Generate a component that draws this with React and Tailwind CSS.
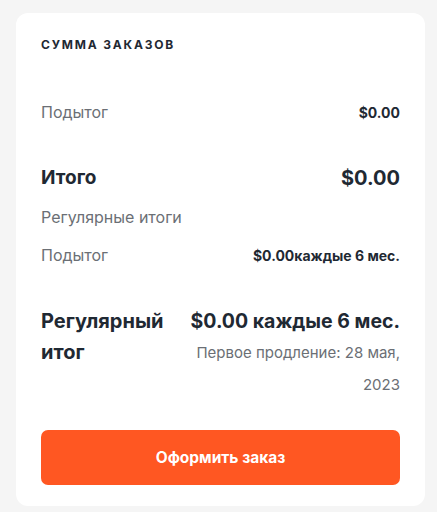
export default function App() {
  return (
    <div className="min-h-[512px] w-[437px] bg-[#f5f5f5] pt-[13px] pl-[16px] pr-[12px] pb-[7px]" style={{ fontFamily: "Inter, 'Noto Sans', sans-serif" }}>
      <div className="rounded-[12px] bg-white px-[25px] pt-[25px] pb-[21px]">
        <h2 className="text-[12px] font-bold tracking-[0.15em] text-[#1f2933] leading-[14px]">СУММА ЗАКАЗОВ</h2>
        <div className="mt-[48px] flex items-center justify-between h-[24px]">
          <span className="text-[16px] text-[#6b6f75]">Подытог</span>
          <span className="text-[14px] font-bold text-[#1f2933]">$0.00</span>
        </div>
        <div className="mt-[42px] flex items-center justify-between h-[24px]">
          <span className="text-[19px] font-bold text-[#1f2933]">Итого</span>
          <span className="text-[20px] font-bold text-[#1f2933]">$0.00</span>
        </div>
        <div className="mt-[15px] h-[24px] flex items-center">
          <span className="text-[16px] text-[#6b6f75]">Регулярные итоги</span>
        </div>
        <div className="mt-[14px] flex items-center justify-between h-[24px]">
          <span className="text-[16px] text-[#6b6f75]">Подытог</span>
          <span className="text-[14px] font-bold text-[#1f2933]">$0.00каждые 6 мес.</span>
        </div>
        <div className="mt-[39px] flex justify-between">
          <div className="text-[20px] font-bold text-[#1f2933] leading-[31px] w-[130px]">Регулярный итог</div>
          <div className="text-right">
            <div className="text-[19.5px] font-bold text-[#1f2933] leading-[31px]">$0.00 каждые 6 мес.</div>
            <div className="text-[15px] text-[#6b6f75] leading-[32px] w-[212px] ml-auto">Первое продление: 28 мая, 2023</div>
          </div>
        </div>
        <button className="mt-[29px] w-full h-[55px] rounded-[7px] bg-[#ff5722] text-white text-[15.5px] font-bold">
          Оформить заказ
        </button>
      </div>
    </div>
  );
}
